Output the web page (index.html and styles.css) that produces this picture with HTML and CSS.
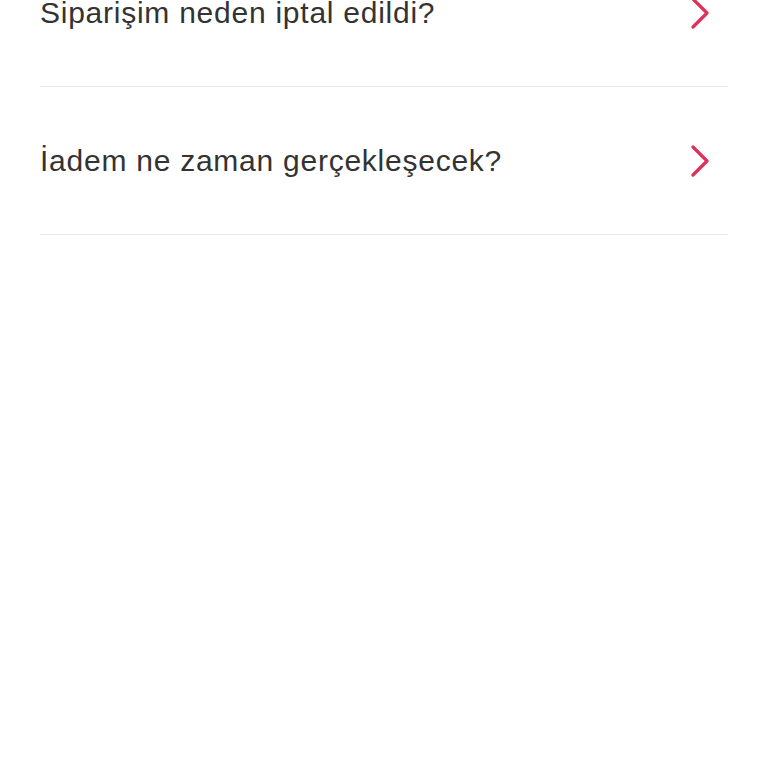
FILE: index.html
```html
<!DOCTYPE html>
<html lang="tr">
<head>
<meta charset="UTF-8">
<meta name="viewport" content="width=device-width, initial-scale=1.0">
<title>Yardım</title>
<link rel="stylesheet" href="styles.css">
</head>
<body>

<ul class="faq-list">
    <li class="faq-item">
        <span class="faq-question">Siparişim neden iptal edildi?</span>
        <svg class="chevron" width="20" height="32" viewBox="0 0 20 32"><path d="M3 2 L17 16 L3 30" fill="none" stroke="#e0305a" stroke-width="3.2" stroke-linecap="round" stroke-linejoin="round"/></svg>
    </li>
    <li class="faq-item">
        <span class="faq-question">İadem ne zaman gerçekleşecek?</span>
        <svg class="chevron" width="20" height="32" viewBox="0 0 20 32"><path d="M3 2 L17 16 L3 30" fill="none" stroke="#e0305a" stroke-width="3.2" stroke-linecap="round" stroke-linejoin="round"/></svg>
    </li>
</ul>

</body>
</html>
```

FILE: styles.css
```css
body {
    margin: 0;
    background-color: #fff;
    font-family: "Liberation Sans", Arial, sans-serif;
    overflow: hidden;
}

.faq-list {
    list-style: none;
    margin: -61px 40px 0 40px;
    padding: 0;
}

.faq-item {
    display: flex;
    align-items: center;
    justify-content: space-between;
    height: 147px;
    border-bottom: 1px solid #e8e8e8;
}

.faq-question {
    font-size: 30px;
    letter-spacing: 0.75px;
    color: #333;
}

.chevron {
    margin-right: 18px;
}
```
